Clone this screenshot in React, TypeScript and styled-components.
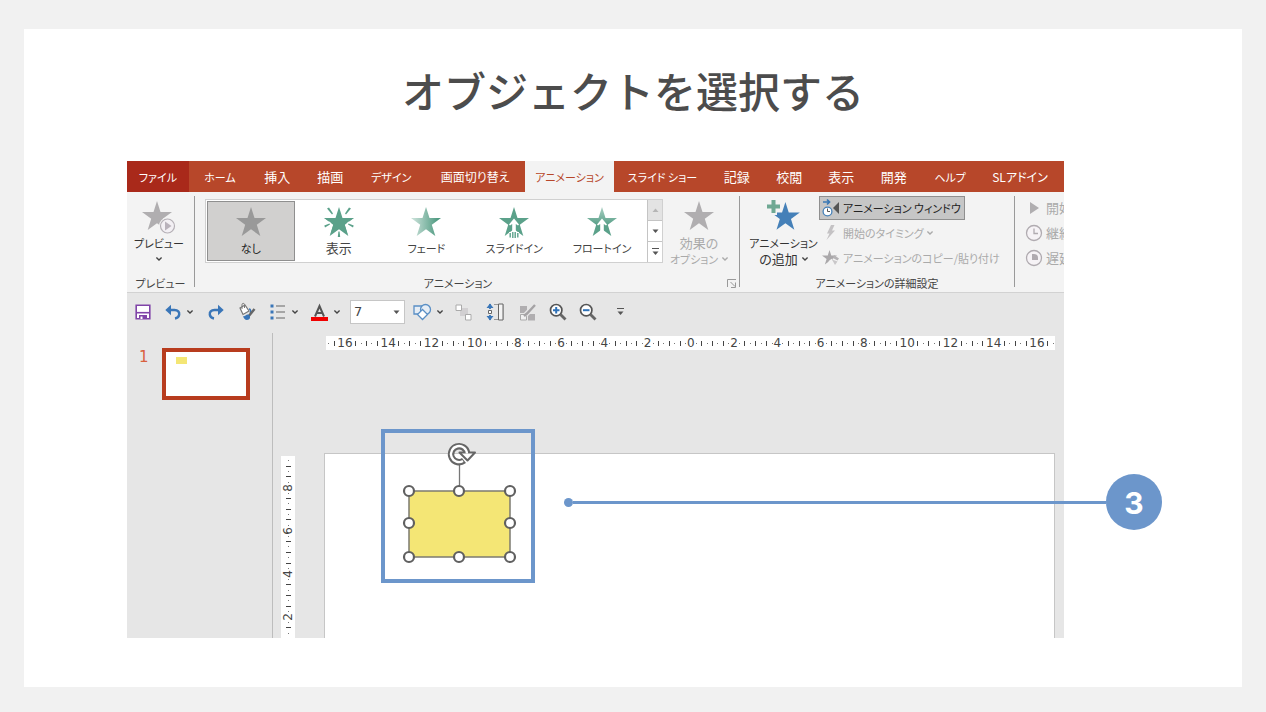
import React from "react";
import styled, { createGlobalStyle, css } from "styled-components";

const GlobalStyle = createGlobalStyle`
  * { box-sizing: border-box; }
  body {
    margin: 0;
    background: #f1f1f1;
    font-family: "Noto Sans CJK JP", "Noto Sans", sans-serif;
    color: #444;
  }
  button, select {
    font: inherit;
    color: inherit;
    border: 0;
    padding: 0;
    margin: 0;
    background: none;
    font-feature-settings: inherit;
  }
  svg { display: block; flex: none; overflow: visible; }
`;

const Page = styled.main`
  min-height: 100vh;
  padding: 29px 24px 25px;
`;

const Card = styled.section`
  min-height: 658px;
  background: #fff;
  padding: 30px 178px 48px 103px;
`;

const Title = styled.h1`
  margin: 0 -178px 40px -103px;
  font-size: 42px;
  line-height: 62px;
  font-weight: 500;
  color: #4c4c4c;
  text-align: center;
`;

const Shot = styled.div`
  position: relative;
  font-size: 11px;
  line-height: 16px;
  font-feature-settings: "palt";
  white-space: nowrap;
`;

/* ---------- ribbon tabs ---------- */

const TabBar = styled.nav`
  display: flex;
  height: 31px;
  padding-right: 4px;
  background: #b7472a;
`;

const Tab = styled.button<{ $size: number; $kind?: "file" | "active"; $font?: number }>`
  flex: ${(p) => p.$size} 1 0;
  min-width: 0;
  color: #fff;
  font-size: ${(p) => p.$font ?? 11}px;
  ${(p) => p.$kind === "file" && css`background: #a9291a;`}
  ${(p) => p.$kind === "active" && css`
    background: #f3f3f3;
    color: #b7472a;
  `}
`;

const tabs: { label: string; size: number; kind?: "file" | "active"; font?: number }[] = [
  { label: "ファイル", size: 62, kind: "file" },
  { label: "ホーム", size: 62 },
  { label: "挿入", size: 53, font: 13 },
  { label: "描画", size: 53, font: 13 },
  { label: "デザイン", size: 69 },
  { label: "画面切り替え", size: 99, font: 12 },
  { label: "アニメーション", size: 90, kind: "active" },
  { label: "スライド ショー", size: 96 },
  { label: "記録", size: 53, font: 13 },
  { label: "校閲", size: 52, font: 13 },
  { label: "表示", size: 52, font: 13 },
  { label: "開発", size: 53, font: 13 },
  { label: "ヘルプ", size: 60 },
  { label: "SLアドイン", size: 80, font: 12 },
];

/* ---------- ribbon ---------- */

const Ribbon = styled.div`
  display: flex;
  height: 101px;
  padding-top: 4px;
  background: #f3f3f3;
  border-bottom: 1px solid #d2d2d2;
`;

const Group = styled.section<{ $width?: number }>`
  ${(p) => (p.$width ? css`flex: 0 0 ${p.$width}px;` : css`flex: 1 1 0;`)}
  min-width: 0;
  display: flex;
  flex-direction: column;
  justify-content: space-between;
`;

const CutGroup = styled(Group)`
  overflow: hidden;
  padding-left: 7px;
`;

const Separator = styled.i`
  flex: 0 0 1px;
  height: 91px;
  background: #999;
`;

const GroupBody = styled.div<{ $end?: number }>`
  display: flex;
  align-items: flex-start;
  padding-right: ${(p) => p.$end ?? 0}px;
`;

const Caption = styled.div<{ $inset?: boolean }>`
  display: flex;
  align-items: center;
  height: 18px;
  padding: 0 2px 0 ${(p) => (p.$inset ? "10px" : "2px")};
  span { flex: 1; text-align: center; }
  button { margin-left: 16px; }
`;

const BigButton = styled.button<{ $width: number; $muted?: boolean; $indent?: number }>`
  flex: 0 0 ${(p) => p.$width}px;
  display: flex;
  flex-direction: column;
  align-items: center;
  gap: 4px;
  padding: 5px 0 0 ${(p) => p.$indent ?? 0}px;
  color: ${(p) => (p.$muted ? "#aaa" : "#333")};
`;

const ButtonLine = styled.span`
  display: flex;
  align-items: center;
  justify-content: center;
  gap: 4px;
  min-height: 16px;
`;

const Kanji = styled.span`
  font-size: 13px;
`;

const Gallery = styled.div`
  flex: 1 1 0;
  min-width: 0;
  height: 64px;
  margin: 3px 0 0 10px;
  display: flex;
  background: #fff;
  border: 1px solid #d0d0d0;
`;

const GalleryItems = styled.div`
  flex: 1;
  min-width: 0;
  display: flex;
  padding: 1px;
`;

const GalleryItem = styled.button<{ $selected?: boolean }>`
  flex: 1 1 0;
  min-width: 0;
  display: flex;
  flex-direction: column;
  align-items: center;
  gap: 3px;
  padding-top: 5px;
  color: #444;
  border: 1px solid transparent;
  ${(p) => p.$selected && css`
    background: #d1d0cf;
    border-color: #8f8f8f;
    color: #222;
  `}
`;

const GalleryScroll = styled.div`
  flex: 0 0 15px;
  display: flex;
  flex-direction: column;
  border-left: 1px solid #c4c4c4;
`;

const ScrollButton = styled.button<{ $off?: boolean }>`
  flex: 1;
  display: flex;
  align-items: center;
  justify-content: center;
  background: ${(p) => (p.$off ? "#e3e3e3" : "#fff")};
  & + & { border-top: 1px solid #c4c4c4; }
`;

const Stack = styled.div`
  display: flex;
  flex-direction: column;
  align-items: flex-start;
  gap: 1px;
`;

const RowButton = styled.button<{ $on?: boolean; $muted?: boolean }>`
  display: flex;
  align-items: center;
  gap: 3px;
  height: 24px;
  padding: 0 3px 0 2px;
  border: 1px solid ${(p) => (p.$on ? "#8f8f8f" : "transparent")};
  background: ${(p) => (p.$on ? "#c6c6c6" : "none")};
  color: ${(p) => (p.$muted ? "#aaa" : "#222")};
`;

/* ---------- quick access toolbar ---------- */

const QuickBar = styled.div`
  display: flex;
  align-items: center;
  height: 40px;
  padding-bottom: 2px;
  background: #e6e6e6;
`;

const Tool = styled.button<{ $width: number }>`
  flex: 0 0 ${(p) => p.$width}px;
  height: 24px;
  display: flex;
  align-items: center;
  justify-content: center;
  gap: 6px;
`;

const SizeBox = styled.label`
  display: grid;
  align-items: center;
  width: 55px;
  height: 24px;
  margin: 0 4px;
  background: #fff;
  border: 1px solid #c6c6c6;
  > * { grid-area: 1 / 1; }
  select {
    appearance: none;
    width: 100%;
    padding-left: 3px;
    font: 13px/20px "DejaVu Sans", sans-serif;
    color: #444;
  }
  svg { justify-self: end; margin-right: 4px; pointer-events: none; }
`;

/* ---------- workspace ---------- */

const Workspace = styled.div`
  display: flex;
  height: 305px;
  background: #e6e6e6;
`;

const ThumbPane = styled.aside`
  flex: 0 0 146px;
  display: flex;
  align-items: flex-start;
  gap: 13px;
  padding: 15px 0 0 12px;
  border-right: 1px solid #bdbdbd;
  font: 15px/18px "DejaVu Sans", sans-serif;
  color: #d9603f;
`;

const Thumb = styled.button`
  width: 88px;
  height: 52px;
  padding: 5px 0 0 10px;
  display: flex;
  background: #fff;
  border: 4px solid #b83c1e;
  i { width: 11px; height: 7px; background: #f4e675; }
`;

const Editor = styled.div`
  flex: 1;
  min-width: 0;
  display: flex;
  flex-direction: column;
  justify-content: space-between;
  padding: 3px 9px 0 8px;
`;

const Ruler = styled.div<{ $vertical?: boolean }>`
  display: flex;
  overflow: hidden;
  background: #fff;
  font: 12px/14px "DejaVu Sans", sans-serif;
  color: #444;
  ${(p) => p.$vertical
    ? css`
        flex: 0 0 14px;
        flex-direction: column;
        margin-top: 3px;
        padding-top: 2px;
      `
    : css`
        height: 14px;
        margin-left: 45px;
      `}
`;

const Mark = styled.span<{ $vertical?: boolean }>`
  flex: ${(p) => (p.$vertical ? "0 0 3%" : "1 1 0")};
  min-width: 0;
  min-height: 0;
  display: flex;
  align-items: center;
  justify-content: center;
  b { font-weight: 400; ${(p) => p.$vertical && css`transform: rotate(-90deg);`} }
`;

const Tick = styled.i<{ $vertical?: boolean; $long?: boolean }>`
  flex: none;
  width: ${(p) => (p.$vertical && p.$long ? 5 : 1)}px;
  height: ${(p) => (!p.$vertical && p.$long ? 5 : 1)}px;
  background: ${(p) => (p.$long ? "#444" : "#777")};
`;

const SlideRow = styled.div`
  display: flex;
  height: 185px;
`;

const Slide = styled.div`
  position: relative;
  flex: 1;
  margin-left: 29px;
  background: #fff;
  border: 1px solid #c6c6c6;
  border-bottom: 0;
`;

const Highlight = styled.div`
  position: absolute;
  left: 56px;
  top: -25px;
  width: 154px;
  height: 154px;
  border: 4px solid #6c96cb;
`;

const Callout = styled.div`
  position: absolute;
  left: 437px;
  right: -98px;
  top: 313px;
  display: flex;
  align-items: center;
  color: #6c96cb;
`;

const CalloutDot = styled.i`
  width: 9px;
  height: 9px;
  border-radius: 50%;
  background: currentColor;
`;

const CalloutLine = styled.i`
  flex: 1;
  height: 3px;
  background: currentColor;
`;

const CalloutNumber = styled.span`
  width: 56px;
  height: 56px;
  border-radius: 50%;
  background: #6c96cb;
  color: #fff;
  font: 700 30px/58px Inter, sans-serif;
  text-align: center;
`;

/* ---------- icons ---------- */

const STAR = "M15 0L18.5 11H30L20.8 17.8L24.3 29L15 22.2L5.7 29L9.2 17.8L0 11H11.5Z";

const Star = ({ fill, children }: { fill: string; children?: React.ReactNode }) => (
  <svg width="30" height="30" viewBox="0 0 30 30">
    <path d={STAR} fill={fill} />
    {children}
  </svg>
);

const Chevron = ({ color = "#444" }: { color?: string }) => (
  <svg width="6" height="4" viewBox="0 0 6 4">
    <path d="M0.4 0.6L3 3L5.6 0.6" fill="none" stroke={color} strokeWidth="1.4" />
  </svg>
);

const Triangle = ({ up, bar, color = "#555" }: { up?: boolean; bar?: boolean; color?: string }) => (
  <svg width="7" height="8" viewBox="0 0 7 8">
    {bar && <path d="M0 0.5H7" stroke={color} />}
    <path d={up ? "M0.5 6L3.5 2.5L6.5 6Z" : bar ? "M0.5 3.5L3.5 7L6.5 3.5Z" : "M0.5 2.5L3.5 6L6.5 2.5Z"} fill={color} />
  </svg>
);

const Burst = () => (
  <svg width="30" height="30" viewBox="0 0 30 30">
    <path d={STAR} fill="#5ba18a" />
    <path d="M3 0L8.5 8M27 0L21.5 8M15 31V24M0 19.5L7 16M30 19.5L23 16" stroke="#fff" strokeWidth="4.4" />
    <path d="M0.500 11H29.500L20.500 17.500L23.500 27L15 21.500L6.500 27L9.500 17.500Z" fill="#5ba18a" />
    <path d="M15 31V24" stroke="#fff" strokeWidth="4" />
    <g fill="#5ba18a">
      <path d="M3 1.6L5 0.4L9 6.6L8 7.4ZM27 1.6L25 0.4L21 6.6L22 7.4Z" />
      <path d="M0.3 18.5L5.5 16.5L6 17.5L1 20.5ZM29.7 18.5L24.5 16.5L24 17.5L29 20.5Z" />
      <path d="M14.4 24.5H15.6L16.2 30H13.8Z" />
    </g>
  </svg>
);

const Fade = () => (
  <svg width="30" height="30" viewBox="0 0 30 30">
    <defs>
      <linearGradient id="fade" x1="0" x2="1">
        <stop offset="0.1" stopColor="#c3ddd4" />
        <stop offset="0.9" stopColor="#4f9a81" />
      </linearGradient>
    </defs>
    <path d={STAR} fill="url(#fade)" />
  </svg>
);

const ARROW = "M15 11.5L20 17.5L19 18.5L16.8 17V24.5H13.2V17L11 18.5L10 17.5Z";

const FlyIn = () => (
  <Star fill="#5ba18a">
    <path d={ARROW} fill="#fff" />
    <path d="M10 25H20V31H10Z" fill="#fff" />
    <path d="M11.2 26V30.5M13.8 25V31M16.2 25V31M18.8 26V30.5" stroke="#5ba18a" strokeWidth="1.4" />
  </Star>
);

const FloatIn = () => (
  <svg width="30" height="30" viewBox="0 0 30 30">
    <defs>
      <linearGradient id="float" x1="0" x2="0" y1="0" y2="1">
        <stop offset="0" stopColor="#a9cfc2" />
        <stop offset="0.6" stopColor="#5ba18a" />
      </linearGradient>
    </defs>
    <path d={STAR} fill="url(#float)" />
    <path d={ARROW} fill="#fff" />
  </svg>
);

const PreviewIcon = () => (
  <svg width="34" height="30" viewBox="0 0 34 30">
    <path d={STAR} fill="#b0aeb0" />
    <circle cx="25.5" cy="25" r="8.5" fill="#f3f3f3" />
    <circle cx="25.5" cy="25" r="7" fill="#f3f0f4" stroke="#b5b0b6" strokeWidth="1.2" />
    <path d="M23 20.5V29.5L29.5 25Z" fill="#b9b2bb" />
  </svg>
);

const AddStarIcon = () => (
  <svg width="32" height="30" viewBox="0 0 32 30">
    <path transform="translate(3 1) scale(0.96)" d={STAR} fill="#4580b8" />
    <path d="M2 -3H9V2H14V9H9V14H2V9H-3V2H2Z" fill="#f3f3f3" />
    <path d="M3.5 -1H7.5V3.5H12V7.5H7.5V12H3.5V7.5H-1V3.5H3.5Z" fill="#6fa893" />
  </svg>
);

const PaneIcon = () => (
  <svg width="18" height="18" viewBox="0 0 18 18">
    <path d="M1 3H7M5 0.5L7.5 3L5 5.5" stroke="#3a78b5" strokeWidth="1.7" fill="none" />
    <circle cx="5.5" cy="12.5" r="4.4" fill="#fff" stroke="#4580b8" strokeWidth="1.3" />
    <path d="M5.5 9.5V12.5H8" stroke="#555" fill="none" />
    <path d="M17 3V15L11 9Z" fill="#555" />
  </svg>
);

const BoltIcon = () => (
  <svg width="18" height="18" viewBox="0 0 18 18">
    <path d="M9 1H12.5L10 6.5H13L4.5 16L7.5 9.5H5Z" fill="#c4c2c4" />
  </svg>
);

const PainterIcon = () => (
  <svg width="18" height="18" viewBox="0 0 18 18">
    <path transform="translate(0 1) scale(0.5)" d={STAR} fill="#aaa8aa" />
    <path d="M8 11L12 16" stroke="#f3f3f3" strokeWidth="4" />
    <path d="M10 10.5L15.5 12.5L13 16Z" fill="#c9c7c9" />
    <path d="M12 6L17 9.5L15.5 11.5L11 9Z" fill="#b5b3b5" />
  </svg>
);

const PlayIcon = () => (
  <svg width="18" height="18" viewBox="0 0 18 18">
    <path d="M5 3V15L14 9Z" fill="#b0aeb0" />
  </svg>
);

const ClockIcon = ({ filled }: { filled?: boolean }) => (
  <svg width="18" height="18" viewBox="0 0 18 18">
    <circle cx="9" cy="9" r="7.5" fill="#f6f3f6" stroke="#b0abb0" strokeWidth="1.3" />
    {filled
      ? <path d="M7 5H9A4 4 0 0 1 13 9V11H7Z" fill="#b0abb0" />
      : <path d="M9 4.5V9.5H13" fill="none" stroke="#b0abb0" strokeWidth="1.3" />}
  </svg>
);

const LauncherIcon = () => (
  <svg width="10" height="9" viewBox="0 0 10 9">
    <path d="M0.5 8V0.5H9M3.5 3L8 7.5M8.5 3.5V8.5H4" fill="none" stroke="#999" />
  </svg>
);

const SaveIcon = () => (
  <svg width="16" height="16" viewBox="0 0 16 16">
    <path d="M1.2 1.2H14.8V14.8H1.2Z" fill="#fff" stroke="#8044a8" strokeWidth="1.6" />
    <path d="M1 8.7H15" stroke="#8044a8" strokeWidth="1.6" />
    <path d="M4 11H12V15H4Z" fill="#8044a8" />
    <path d="M5.5 12.5H7.5V15H5.5Z" fill="#fff" />
  </svg>
);

const UndoIcon = ({ flip }: { flip?: boolean }) => (
  <svg width="16" height="16" viewBox="0 0 16 16">
    <g transform={flip ? "matrix(-1 0 0 1 16 0)" : undefined}>
      <path d="M0.3 6L6 0.8V11.2Z" fill="#3a76b8" />
      <path d="M4 6H9.5C13 6 14.5 8 14.2 10.5C14 12.5 12.5 14 10 14.5" fill="none" stroke="#3a76b8" strokeWidth="2.4" />
    </g>
  </svg>
);

const FillIcon = () => (
  <svg width="18" height="18" viewBox="0 0 18 18">
    <path d="M2 5L7 2L11 8L5 11.5Z" fill="#fff" stroke="#777" strokeWidth="1.2" />
    <path d="M4 6V1.5C4 0 6.5 0 6.5 1.5V5" fill="none" stroke="#777" />
    <path d="M11 6C13 6 13 9 12 10" fill="none" stroke="#3a76b8" strokeWidth="1.5" />
    <path d="M16.5 6L10 14" stroke="#666" strokeWidth="2.4" />
    <path d="M5 13C8 14 8 10.5 11 12C13 14 12 17 9 17C7 17 5.5 15 5 13Z" fill="#3a76b8" />
  </svg>
);

const ListIcon = () => (
  <svg width="16" height="16" viewBox="0 0 16 16">
    <path d="M0.5 2H3.5M0.5 8H3.5M0.5 14H3.5" stroke="#3a76b8" strokeWidth="3" />
    <path d="M6 2H15M6 8H15M6 14H15" stroke="#666" strokeWidth="1.2" />
  </svg>
);

const FontColorIcon = () => (
  <svg width="17" height="17" viewBox="0 0 17 17">
    <path d="M4 12.5L8.5 2L13 12.5M5.5 9H11.5" fill="none" stroke="#555" strokeWidth="2" />
    <path d="M0 13H17V17H0Z" fill="#f00000" />
  </svg>
);

const ShapesIcon = () => (
  <svg width="18" height="18" viewBox="0 0 18 18" stroke="#5a8fc5" strokeWidth="1.3">
    <path d="M1 3H9V11H1Z" fill="#e6edf5" />
    <circle cx="12.5" cy="6.5" r="5" fill="#e6edf5" />
    <path d="M9.5 6.5L14.5 11.5L9.5 16.5L4.5 11.5Z" fill="#fff" />
  </svg>
);

const ArrangeIcon = () => (
  <svg width="17" height="17" viewBox="0 0 17 17">
    <path d="M5 4H13V12H5Z" fill="#d2d0d2" />
    <path d="M1 1H6.5V6.5H1ZM10.5 10.5H16V16H10.5Z" fill="#fff" stroke="#aaa" />
  </svg>
);

const HeightIcon = () => (
  <svg width="18" height="18" viewBox="0 0 18 18">
    <path d="M8 1.5H17V16.5H8" fill="none" stroke="#999" />
    <path d="M4 1V6M4 12V17" stroke="#3a76b8" strokeWidth="1.8" />
    <path d="M0.5 5L4 0.5L7.5 5ZM0.5 13L4 17.5L7.5 13Z" fill="#3a76b8" />
    <path d="M2.5 7.5H5.5V10.5H2.5Z" fill="#fff" stroke="#666" />
    <path d="M12.5 1V17H17V1Z" fill="#f3f3f3" stroke="#666" />
  </svg>
);

const StyleIcon = () => (
  <svg width="17" height="17" viewBox="0 0 17 17">
    <path d="M1 2H8V9H1ZM9 10H16V16.5H9Z" fill="#b0aeb0" />
    <path d="M1.5 10.5H7.5V16H1.5Z" fill="#f0f0f0" stroke="#aaa" />
    <path d="M16 1L6.5 11" stroke="#e6e6e6" strokeWidth="5" />
    <path d="M16 1L8 9.5L5 12" stroke="#a5a3a5" strokeWidth="2.4" fill="none" />
  </svg>
);

const ZoomIcon = ({ plus }: { plus?: boolean }) => (
  <svg width="18" height="18" viewBox="0 0 18 18">
    <circle cx="7.2" cy="7.2" r="5.7" fill="#fff" stroke="#555" strokeWidth="1.7" />
    <path d="M11.5 11.5L16.5 16.5" stroke="#666" strokeWidth="2.8" />
    <path d={plus ? "M4 7.2H10.5M7.2 4V10.5" : "M4 7.2H10.5"} stroke="#2f72b8" strokeWidth="2" />
  </svg>
);

const handles = [
  [24, 58], [74, 58], [125, 58],
  [24, 90], [125, 90],
  [24, 124], [74, 124], [125, 124],
];

const SelectedShape = () => (
  <svg width="146" height="146" viewBox="0 0 146 146" role="img" aria-label="四角形">
    <path d="M24 58H125V124H24Z" fill="#f4e675" stroke="#7c7b70" strokeWidth="1.5" />
    <path d="M74.5 31V54" stroke="#777" strokeWidth="1.3" />
    <path d="M79 27.5A8 8 0 1 1 82 20" fill="none" stroke="#666" strokeWidth="6.5" />
    <path d="M74.5 19.5H90L82.5 27.5Z" fill="#fff" stroke="#666" strokeWidth="2" strokeLinejoin="round" />
    <path d="M78 28A8 8 0 1 1 82 20.5" fill="none" stroke="#fff" strokeWidth="2.4" />
    {handles.map(([x, y]) => (
      <circle key={`${x}-${y}`} cx={x} cy={y} r="5" fill="#fff" stroke="#606060" strokeWidth="2.2" />
    ))}
  </svg>
);

/* ---------- rulers ---------- */

const horizontalMarks = Array.from({ length: 135 }, (_, n) => {
  const i = Math.abs(n - 67);
  if (i % 8 === 0) return String(i / 4);
  if (i % 2 === 0) return "|";
  const nearest = Math.round(i / 8) * 2;
  const touches = i % 8 === 1 || i % 8 === 7;
  return touches && nearest >= 10 ? "" : ".";
});

const verticalMarks = Array.from({ length: 34 }, (_, n) => {
  if (n % 8 === 5) return String(8 - (n - 5) / 4);
  return n % 2 === 1 ? "|" : ".";
});

const RulerScale = ({ marks, vertical }: { marks: string[]; vertical?: boolean }) => (
  <Ruler $vertical={vertical}>
    {marks.map((m, n) => (
      <Mark key={n} $vertical={vertical}>
        {m === "|" || m === "." ? <Tick $vertical={vertical} $long={m === "|"} /> : m && <b>{m}</b>}
      </Mark>
    ))}
  </Ruler>
);

export default function App() {
  return (
    <>
      <GlobalStyle />
      <Page>
        <Card>
          <Title>オブジェクトを選択する</Title>
          <Shot>
            <TabBar>
              {tabs.map((t) => (
                <Tab key={t.label} $size={t.size} $kind={t.kind} $font={t.font}>{t.label}</Tab>
              ))}
            </TabBar>

            <Ribbon>
              <Group $width={67}>
                <GroupBody>
                  <BigButton $width={64}>
                    <PreviewIcon />
                    <span>
                      <ButtonLine>プレビュー</ButtonLine>
                      <ButtonLine><Chevron /></ButtonLine>
                    </span>
                  </BigButton>
                </GroupBody>
                <Caption><span>プレビュー</span></Caption>
              </Group>
              <Separator />

              <Group>
                <GroupBody $end={4}>
                  <Gallery>
                    <GalleryItems>
                      <GalleryItem $selected><Star fill="#999" />なし</GalleryItem>
                      <GalleryItem><Burst /><Kanji>表示</Kanji></GalleryItem>
                      <GalleryItem><Fade />フェード</GalleryItem>
                      <GalleryItem><FlyIn />スライドイン</GalleryItem>
                      <GalleryItem><FloatIn />フロートイン</GalleryItem>
                    </GalleryItems>
                    <GalleryScroll>
                      <ScrollButton $off aria-label="上へ"><Triangle up color="#b5b5b5" /></ScrollButton>
                      <ScrollButton aria-label="下へ"><Triangle /></ScrollButton>
                      <ScrollButton aria-label="その他"><Triangle bar /></ScrollButton>
                    </GalleryScroll>
                  </Gallery>
                  <BigButton $width={72} $muted>
                    <Star fill="#b0aeb0" />
                    <span>
                      <ButtonLine><Kanji>効果の</Kanji></ButtonLine>
                      <ButtonLine>オプション<Chevron color="#aaa" /></ButtonLine>
                    </span>
                  </BigButton>
                </GroupBody>
                <Caption $inset>
                  <span>アニメーション</span>
                  <button aria-label="アニメーションの詳細"><LauncherIcon /></button>
                </Caption>
              </Group>
              <Separator />

              <Group $width={274}>
                <GroupBody>
                  <BigButton $width={79} $indent={8}>
                    <AddStarIcon />
                    <span>
                      <ButtonLine>アニメーション</ButtonLine>
                      <ButtonLine><Kanji>の追加</Kanji><Chevron /></ButtonLine>
                    </span>
                  </BigButton>
                  <Stack>
                    <RowButton $on><PaneIcon />アニメーション ウィンドウ</RowButton>
                    <RowButton $muted><BoltIcon />開始のタイミング<Chevron color="#aaa" /></RowButton>
                    <RowButton $muted><PainterIcon />アニメーションのコピー/貼り付け</RowButton>
                  </Stack>
                </GroupBody>
                <Caption><span>アニメーションの詳細設定</span></Caption>
              </Group>
              <Separator />

              <CutGroup $width={49}>
                <Stack>
                  <RowButton $muted><PlayIcon /><Kanji>開始</Kanji></RowButton>
                  <RowButton $muted><ClockIcon /><Kanji>継続</Kanji></RowButton>
                  <RowButton $muted><ClockIcon filled /><Kanji>遅延</Kanji></RowButton>
                </Stack>
              </CutGroup>
            </Ribbon>

            <QuickBar>
              <Tool $width={31} aria-label="保存"><SaveIcon /></Tool>
              <Tool $width={42} aria-label="元に戻す"><UndoIcon /><Chevron /></Tool>
              <Tool $width={31} aria-label="やり直し"><UndoIcon flip /></Tool>
              <Tool $width={31} aria-label="塗りつぶし"><FillIcon /></Tool>
              <Tool $width={43} aria-label="箇条書き"><ListIcon /><Chevron /></Tool>
              <Tool $width={41} aria-label="フォントの色"><FontColorIcon /><Chevron /></Tool>
              <SizeBox>
                <select aria-label="フォント サイズ" defaultValue="7"><option>7</option></select>
                <Triangle />
              </SizeBox>
              <Tool $width={38} aria-label="図形"><ShapesIcon /><Chevron /></Tool>
              <Tool $width={32} aria-label="配置"><ArrangeIcon /></Tool>
              <Tool $width={32} aria-label="高さを揃える"><HeightIcon /></Tool>
              <Tool $width={32} aria-label="図形の書式"><StyleIcon /></Tool>
              <Tool $width={30} aria-label="拡大"><ZoomIcon plus /></Tool>
              <Tool $width={30} aria-label="縮小"><ZoomIcon /></Tool>
              <Tool $width={34} aria-label="ツールバーのユーザー設定"><Triangle bar /></Tool>
            </QuickBar>

            <Workspace>
              <ThumbPane>
                1
                <Thumb aria-label="スライド 1"><i /></Thumb>
              </ThumbPane>
              <Editor>
                <RulerScale marks={horizontalMarks} />
                <SlideRow>
                  <RulerScale marks={verticalMarks} vertical />
                  <Slide>
                    <Highlight><SelectedShape /></Highlight>
                  </Slide>
                </SlideRow>
              </Editor>
            </Workspace>

            <Callout>
              <CalloutDot />
              <CalloutLine />
              <CalloutNumber>3</CalloutNumber>
            </Callout>
          </Shot>
        </Card>
      </Page>
    </>
  );
}
